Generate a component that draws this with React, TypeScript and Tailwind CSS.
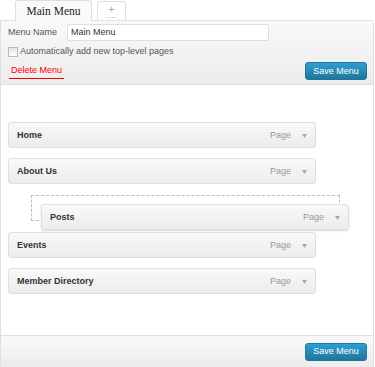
import React from 'react';

const items = [
  { title: 'Home' },
  { title: 'About Us' },
];

function MenuItem({ title, className = '' }: { title: string; className?: string }) {
  return (
    <div
      className={`flex h-[26px] w-[308px] items-center justify-between rounded-[3px] border border-[#dfdfdf] bg-gradient-to-b from-[#f9f9f9] to-[#ececec] pl-[8px] pr-[8px] pt-[2px] ${className}`}
    >
      <span className="text-[9px] font-bold text-[#333]">{title}</span>
      <span className="flex items-center gap-[11px] text-[9px] text-[#999]">
        Page
        <svg width="5" height="4" viewBox="0 0 5 4">
          <path d="M0 0 H5 L2.5 4 Z" fill="#a8a8a8" />
        </svg>
      </span>
    </div>
  );
}

function SaveButton() {
  return (
    <button className="h-[18px] w-[62px] rounded-[3px] border border-[#21759b] bg-gradient-to-b from-[#2e9fd2] to-[#21759b] text-[9px] leading-none text-white">
      Save Menu
    </button>
  );
}

export default function App() {
  return (
    <div className="h-[367px] w-[375px] overflow-hidden bg-white font-['Liberation_Sans',Arial,sans-serif] text-[9px] text-[#333]">
      {/* Tabs */}
      <div className="relative z-10 flex h-[21px] items-end gap-[5px] pl-[15px]">
        <div className="flex h-[21px] w-[77px] items-center justify-center rounded-t-[3px] border border-b-0 border-[#dfdfdf] bg-[#f9f9f9] pt-[1px] font-['Liberation_Serif',serif] text-[11.5px] text-[#222]">
          Main Menu
        </div>
        <div className="mb-[1px] flex h-[19px] w-[29px] flex-col items-center justify-center rounded-t-[3px] border border-b-0 border-[#dfdfdf] bg-white text-[11px] leading-none text-[#aaa]">
          +
          <span className="mt-[2px] w-[7px] border-t border-dotted border-[#bbb]" />
        </div>
      </div>

      {/* Panel */}
      <div className="-mt-[1px] h-[347px] w-[374px] rounded-tr-[3px] border border-[#dfdfdf]">
        {/* Header */}
        <div className="h-[64px] border-b border-[#dfdfdf] bg-gradient-to-b from-[#f9f9f9] to-[#ececec] pl-[7px] pr-[6px] pt-[3px]">
          <div className="flex h-[17px] items-center">
            <span className="w-[59px] text-[9px] text-[#555]">Menu Name</span>
            <div className="flex h-[17px] w-[202px] items-center rounded-[2px] border border-[#dfdfdf] bg-white px-[3px] text-[9px] text-[#333]">
              Main Menu
            </div>
          </div>
          <div className="mt-[6px] flex h-[10px] items-center gap-[2px]">
            <span className="h-[10px] w-[10px] border border-[#bbb] bg-gradient-to-b from-[#e6e6e6] to-white" />
            <span className="text-[9px] text-[#555]">Automatically add new top-level pages</span>
          </div>
          <div className="mt-[5px] flex h-[18px] items-center justify-between">
            <span className="ml-[1px] mt-[1px] border-b border-[#e00] pb-[1px] pl-[2px] pr-[2px] text-[9px] text-[#f00]">
              Delete Menu
            </span>
            <SaveButton />
          </div>
        </div>

        {/* Body */}
        <div className="h-[250px] bg-white px-[7px] pt-[37px]">
          {items.map((it, i) => (
            <MenuItem key={it.title} title={it.title} className={i > 0 ? 'mt-[10px]' : ''} />
          ))}
          <div className="relative ml-[23px] mt-[11px] h-[26px] w-[309px] border border-dashed border-[#bbb]">
            <MenuItem title="Posts" className="absolute left-[9px] top-[8px] shadow-[0_1px_2px_rgba(0,0,0,0.15)]" />
          </div>
          <MenuItem title="Events" className="mt-[11px]" />
          <MenuItem title="Member Directory" className="mt-[10px]" />
        </div>

        {/* Footer */}
        <div className="flex h-[32px] items-center justify-end border-t border-[#dfdfdf] bg-gradient-to-b from-[#f9f9f9] to-[#ececec] pr-[6px]">
          <SaveButton />
        </div>
      </div>
    </div>
  );
}
